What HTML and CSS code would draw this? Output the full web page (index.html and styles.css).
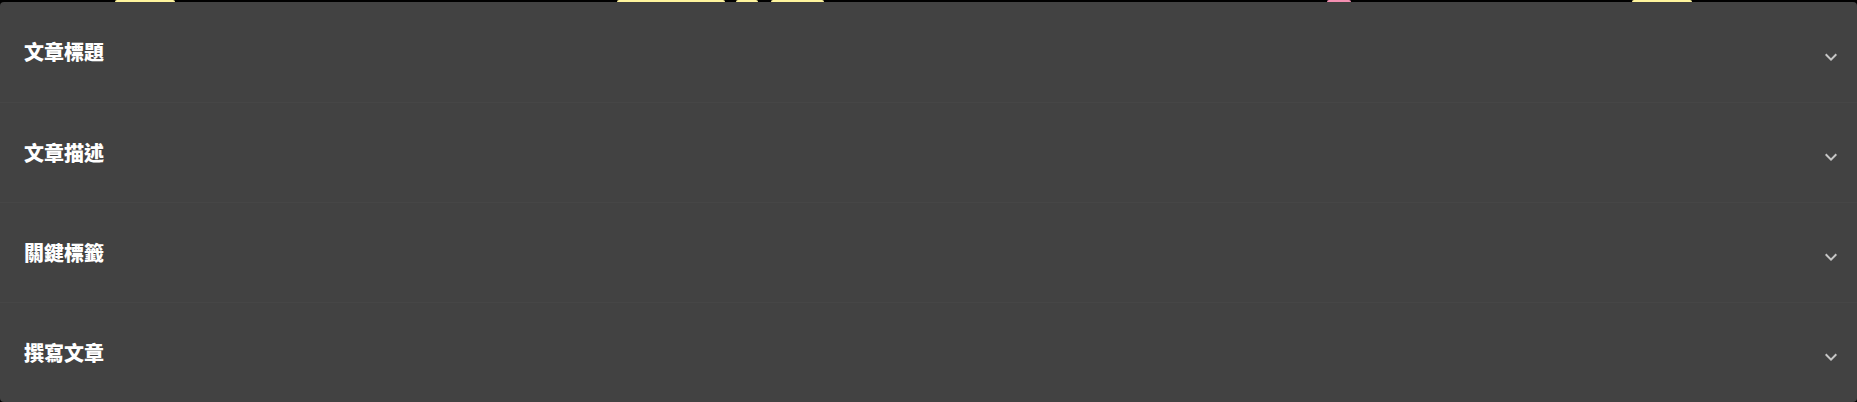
FILE: index.html
```html
<!DOCTYPE html>
<html lang="zh-Hant">
<head>
<meta charset="utf-8">
<title>文章</title>
<link rel="stylesheet" href="styles.css">
</head>
<body>
<div class="tabs">
  <span class="tab yellow" style="margin-left:115px;width:60px"></span>
  <span class="tab yellow" style="margin-left:442px;width:108px"></span>
  <span class="tab yellow" style="margin-left:11px;width:22px"></span>
  <span class="tab yellow" style="margin-left:13px;width:53px"></span>
  <span class="tab pink" style="margin-left:503px;width:24px"></span>
  <span class="tab yellow" style="margin-left:281px;width:60px"></span>
</div>
<div class="panel">
  <div class="row"><span class="label">文章標題</span><svg class="chev" viewBox="0 0 24 24"><path d="M16.59 8.59 12 13.17 7.41 8.59 6 10l6 6 6-6z"/></svg></div>
  <div class="row"><span class="label">文章描述</span><svg class="chev" viewBox="0 0 24 24"><path d="M16.59 8.59 12 13.17 7.41 8.59 6 10l6 6 6-6z"/></svg></div>
  <div class="row"><span class="label">關鍵標籤</span><svg class="chev" viewBox="0 0 24 24"><path d="M16.59 8.59 12 13.17 7.41 8.59 6 10l6 6 6-6z"/></svg></div>
  <div class="row"><span class="label">撰寫文章</span><svg class="chev" viewBox="0 0 24 24"><path d="M16.59 8.59 12 13.17 7.41 8.59 6 10l6 6 6-6z"/></svg></div>
</div>
</body>
</html>
```
FILE: styles.css
```css
html, body {
  margin: 0;
  padding: 0;
  background: #000;
  height: 402px;
  overflow: hidden;
}
body {
  font-family: "Noto Sans CJK TC", "Noto Sans", sans-serif;
}
.tabs {
  display: flex;
  height: 2px;
}
.tab {
  display: block;
  flex-shrink: 0;
  height: 4px;
  border-radius: 2px 2px 0 0;
}
.yellow { background: #fff59d; }
.pink { background: #f48fb1; }
.panel {
  position: relative;
  background: #424242;
  border-radius: 4px;
  height: 400px;
  display: flex;
  flex-direction: column;
}
.row {
  height: 100px;
  display: flex;
  align-items: center;
  justify-content: space-between;
  padding: 0 14px 0 24px;
  box-sizing: border-box;
}
.row + .row {
  border-top: 1px solid #464646;
}
.label {
  color: #fff;
  font-size: 20px;
  font-weight: 900;
  line-height: 24px;
}
.chev {
  width: 24px;
  height: 24px;
  fill: rgba(255,255,255,0.7);
  margin-top: 9px;
}
```
